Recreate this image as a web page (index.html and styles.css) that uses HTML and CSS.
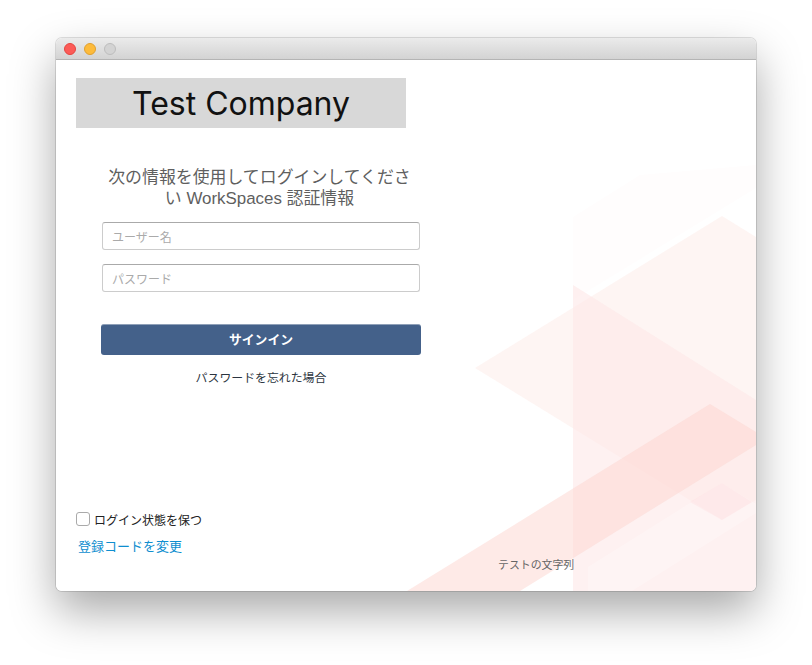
FILE: index.html
```html
<!DOCTYPE html>
<html lang="ja">
<head>
<meta charset="utf-8">
<title>WorkSpaces</title>
<link rel="stylesheet" href="styles.css">
</head>
<body>
<div class="window">
  <div class="titlebar">
    <span class="light light-red"></span>
    <span class="light light-yellow"></span>
    <span class="light light-grey"></span>
  </div>
  <div class="content">
    <svg class="backdrop" viewBox="56 60 700 531" width="700" height="531" aria-hidden="true">
      <polygon class="s-faint" points="573,217 640,175 756,165 756,188 573,300"/>
      <polygon class="s-diamond" points="475,368 722,216 756,237 756,500 722,520"/>
      <polygon class="s-wall" points="573,285 756,400 756,591 573,591"/>
      <polygon class="s-band" points="407,591 710,404 756,432 756,445 520,591"/>
      <polygon class="s-band2" points="588,591 588,567 722,483 756,504 756,513 632,591"/>
      <polygon class="s-small" points="690,502 722,483 752,502 722,520"/>
    </svg>
    <div class="logo">Test Company</div>
    <form class="form">
      <h1 class="heading">次の情報を使用してログインしてください WorkSpaces 認証情報</h1>
      <input class="field" type="text" placeholder="ユーザー名">
      <input class="field" type="password" placeholder="パスワード">
      <button class="signin" type="button">サインイン</button>
      <a class="forgot">パスワードを忘れた場合</a>
    </form>
    <div class="footer">
      <div class="footer-left">
        <label class="remember"><span class="check"></span>ログイン状態を保つ</label>
        <a class="change">登録コードを変更</a>
      </div>
      <div class="note">テストの文字列</div>
    </div>
  </div>
</div>
</body>
</html>
```
FILE: styles.css
```css
html, body { margin: 0; height: 665px; overflow: hidden; background: #fff; }
body { font-family: "Liberation Sans", "Noto Sans CJK JP", sans-serif; padding-top: 38px; box-sizing: border-box; }
.window {
  width: 700px; height: 553px; margin-left: 56px;
  display: flex; flex-direction: column;
  border-radius: 6px;
  box-shadow: 0 20px 45px 0 rgba(0,0,0,.34), 0 0 0 1px rgba(0,0,0,.12);
  overflow: visible;
}
.titlebar {
  height: 21px; flex: none; display: flex; align-items: center; gap: 8px; padding: 0 8px;
  background: linear-gradient(#ebebeb, #d3d3d3);
  border-bottom: 1px solid #b4b4b4;
  border-radius: 6px 6px 0 0;
}
.light { width: 12px; height: 12px; border-radius: 50%; box-sizing: border-box; border: 1px solid; }
.light-red { background: #fc5b57; border-color: #e5453f; }
.light-yellow { background: #fdbb3b; border-color: #e0a02f; }
.light-grey { background: #d3d3d3; border-color: #bdbdbd; }
.content {
  position: relative; flex: 1; display: flex; flex-direction: column;
  padding: 18px 0 0 20px; background: #fff; border-radius: 0 0 6px 6px; overflow: hidden;
}
.backdrop { position: absolute; left: 0; top: 0; }
.s-faint { fill: #fffdfd; }
.s-diamond { fill: #fef0ed; opacity: .65; }
.s-wall { fill: #fee8e8; opacity: .6; }
.s-band { fill: #fdd6d0; opacity: .5; }
.s-band2 { fill: #fff; opacity: .25; }
.s-small { fill: #ffdfe2; opacity: .4; }
.logo {
  position: relative; width: 330px; height: 50px; background: #d8d8d8; color: #111;
  font-family: Inter, sans-serif; font-size: 32px; font-weight: 400; line-height: 51px; text-align: center;
}
.form {
  position: relative; width: 320px; margin: 39px 0 0 25px;
  display: flex; flex-direction: column; align-items: center;
}
.heading {
  box-sizing: border-box; width: 312px; margin: 0 0 13px; padding-right: 3px;
  font-size: 16.9px; line-height: 21px; font-weight: 400; color: #5f5f5f; text-align: center;
  font-family: "Liberation Sans", "Noto Sans CJK JP", sans-serif;
}
.field {
  width: 318px; height: 28px; box-sizing: border-box; margin: 0 0 14px; padding: 3px 9px 0;
  border: 1px solid #ccc; border-top-color: #aaa; border-radius: 3px; background: #fff;
  font-family: "Liberation Sans", "Noto Sans CJK JP", sans-serif; font-size: 12px; outline: none;
}
.field::placeholder { color: #aaa; opacity: 1; }
.signin {
  width: 320px; height: 31px; margin-top: 18px; border: 0; border-top: 1px solid #8fa0b8; border-radius: 3px;
  background: #44618a; color: #fff; font-family: inherit; font-size: 12.8px; font-weight: 700; padding: 0 0 4px;
}
.forgot { margin-top: 14px; font-size: 11.9px; line-height: 18px; color: #2b3440; }
.footer {
  position: relative; margin-top: auto; height: 81px; display: flex; align-items: flex-start;
}
.footer-left { width: 422px; display: flex; flex-direction: column; }
.remember { display: flex; align-items: center; gap: 4px; height: 18px; font-size: 12px; color: #222; }
.check { width: 14px; height: 14px; box-sizing: border-box; border: 1px solid #aaa; border-radius: 3px; background: #fff; }
.change { margin: 10px 0 0 2px; font-size: 13px; line-height: 18px; color: #0f8ecf; }
.note { margin-top: 47px; font-size: 10.9px; line-height: 16px; color: #666; }
```
